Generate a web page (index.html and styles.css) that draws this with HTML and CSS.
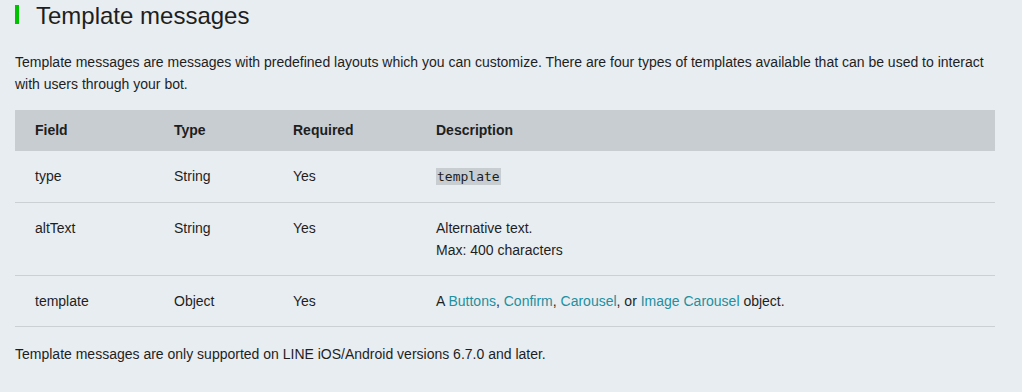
FILE: index.html
```html
<!DOCTYPE html>
<html lang="en">
<head>
  <meta charset="UTF-8">
  <title>Template messages</title>
  <link rel="stylesheet" href="styles.css">
</head>
<body>

  <div class="doc">
    <h2 class="section-title">Template messages</h2>
    <p>Template messages are messages with predefined layouts which you can customize. There are four types of templates available that can be used to interact with users through your bot.</p>

    <table class="fields">
      <thead>
        <tr>
          <th class="col-field">Field</th>
          <th class="col-type">Type</th>
          <th class="col-req">Required</th>
          <th>Description</th>
        </tr>
      </thead>
      <tbody>
        <tr>
          <td>type</td>
          <td>String</td>
          <td>Yes</td>
          <td><code>template</code></td>
        </tr>
        <tr>
          <td>altText</td>
          <td>String</td>
          <td>Yes</td>
          <td>Alternative text.<br>Max: 400 characters</td>
        </tr>
        <tr>
          <td>template</td>
          <td>Object</td>
          <td>Yes</td>
          <td>A <a href="#">Buttons</a>, <a href="#">Confirm</a>, <a href="#">Carousel</a>, or <a href="#">Image Carousel</a> object.</td>
        </tr>
      </tbody>
    </table>

    <p class="note">Template messages are only supported on LINE iOS/Android versions 6.7.0 and later.</p>
  </div>

</body>
</html>
```

FILE: styles.css
```css
* {
  box-sizing: border-box;
}

html, body {
  margin: 0;
  padding: 0;
  background-color: #e8edf1;
  font-family: "Liberation Sans", Arial, sans-serif;
  color: #1e1e1e;
  font-size: 14px;
  line-height: 22px;
}

.doc {
  padding: 0 27px 0 15px;
}

.section-title {
  font-size: 24px;
  font-weight: normal;
  line-height: 29px;
  margin: 1px 0 21px 0;
}

.section-title::before {
  content: "";
  display: inline-block;
  width: 4px;
  height: 19px;
  background: #00c300;
  margin-right: 17px;
}

p {
  margin: 0;
}

.fields {
  width: 980px;
  border-collapse: collapse;
  margin: 15px 0 16px 0;
}

.fields th {
  background: #c8cdd1;
  text-align: left;
  font-weight: bold;
  padding: 9px 20px 10px 20px;
}

.fields td {
  padding: 14px 20px 14px 20px;
  vertical-align: top;
  border-bottom: 1px solid #cbd0d4;
}

.col-field {
  width: 139px;
}

.col-type {
  width: 119px;
}

.col-req {
  width: 143px;
}

code {
  font-family: "DejaVu Sans Mono", "Liberation Mono", monospace;
  font-size: 13px;
  background: #c8cdd1;
  padding: 1px 1px;
}

a {
  color: #22909f;
  text-decoration: none;
}
```
